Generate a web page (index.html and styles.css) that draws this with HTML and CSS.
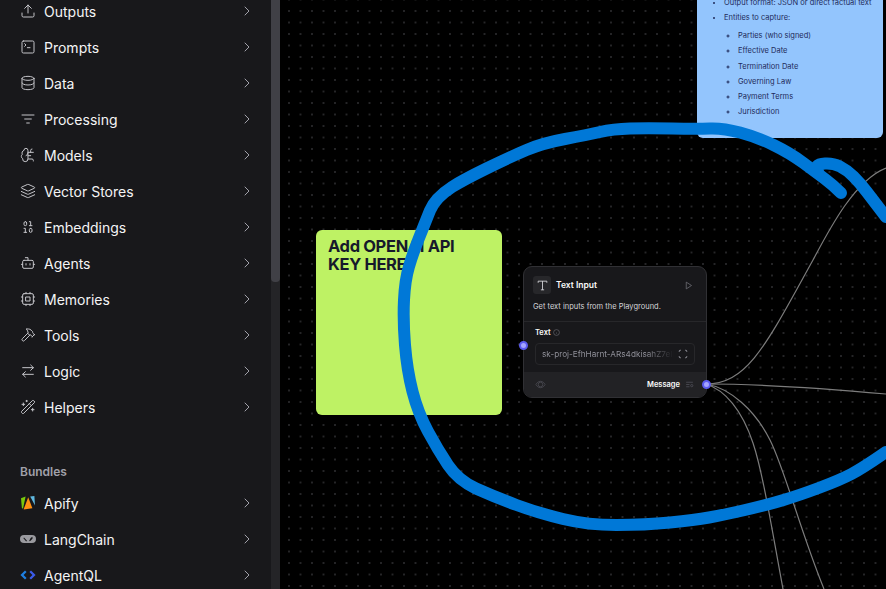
FILE: index.html
```html
<!DOCTYPE html>
<html lang="en">
<head>
  <meta charset="UTF-8">
  <meta name="viewport" content="width=device-width, initial-scale=1.0">
  <title>Flow editor</title>
  <link rel="stylesheet" href="styles.css">
</head>
<body>
<div class="app">
  <aside class="sidebar">
    <div class="sidebar-list">
      <div class="row">
        <svg class="icon" viewBox="0 0 24 24"><path d="M21 15v4a2 2 0 0 1-2 2H5a2 2 0 0 1-2-2v-4"/><path d="M17 8l-5-5-5 5"/><path d="M12 3v12"/></svg>
        <span class="row-name">Outputs</span>
        <svg class="chevron" viewBox="0 0 24 24"><path d="m9 18 6-6-6-6"/></svg>
      </div>
      <div class="row">
        <svg class="icon" viewBox="0 0 24 24"><path d="m7 11 2-2-2-2"/><path d="M11 13h4"/><rect x="3" y="3" width="18" height="18" rx="2"/></svg>
        <span class="row-name">Prompts</span>
        <svg class="chevron" viewBox="0 0 24 24"><path d="m9 18 6-6-6-6"/></svg>
      </div>
      <div class="row">
        <svg class="icon" viewBox="0 0 24 24"><ellipse cx="12" cy="5" rx="9" ry="3"/><path d="M3 5V19A9 3 0 0 0 21 19V5"/><path d="M3 12A9 3 0 0 0 21 12"/></svg>
        <span class="row-name">Data</span>
        <svg class="chevron" viewBox="0 0 24 24"><path d="m9 18 6-6-6-6"/></svg>
      </div>
      <div class="row">
        <svg class="icon" viewBox="0 0 24 24"><path d="M3 6h18"/><path d="M7 12h10"/><path d="M10 18h4"/></svg>
        <span class="row-name">Processing</span>
        <svg class="chevron" viewBox="0 0 24 24"><path d="m9 18 6-6-6-6"/></svg>
      </div>
      <div class="row">
        <svg class="icon" viewBox="0 0 24 24"><path d="M12 5a3 3 0 1 0-5.997.125 4 4 0 0 0-2.526 5.77 4 4 0 0 0 .556 6.588A4 4 0 1 0 12 18Z"/><path d="M9 13a4.5 4.5 0 0 0 3-4"/><path d="M12 13h4"/><path d="M12 18h6a2 2 0 0 1 2 2v1"/><path d="M12 8h8"/><path d="M16 8V5a2 2 0 0 1 2-2"/></svg>
        <span class="row-name">Models</span>
        <svg class="chevron" viewBox="0 0 24 24"><path d="m9 18 6-6-6-6"/></svg>
      </div>
      <div class="row">
        <svg class="icon" viewBox="0 0 24 24"><path d="m12.83 2.18a2 2 0 0 0-1.66 0L2.6 6.08a1 1 0 0 0 0 1.83l8.58 3.91a2 2 0 0 0 1.66 0l8.58-3.9a1 1 0 0 0 0-1.83Z"/><path d="m22 17.65-9.17 4.16a2 2 0 0 1-1.66 0L2 17.65"/><path d="m22 12.65-9.17 4.16a2 2 0 0 1-1.66 0L2 12.65"/></svg>
        <span class="row-name">Vector Stores</span>
        <svg class="chevron" viewBox="0 0 24 24"><path d="m9 18 6-6-6-6"/></svg>
      </div>
      <div class="row">
        <svg class="icon" viewBox="0 0 24 24"><rect x="14" y="14" width="4" height="6" rx="2"/><rect x="6" y="4" width="4" height="6" rx="2"/><path d="M6 20h4"/><path d="M14 10h4"/><path d="M6 14h2v6"/><path d="M14 4h2v6"/></svg>
        <span class="row-name">Embeddings</span>
        <svg class="chevron" viewBox="0 0 24 24"><path d="m9 18 6-6-6-6"/></svg>
      </div>
      <div class="row">
        <svg class="icon" viewBox="0 0 24 24"><path d="M12 8V4H8"/><rect x="4" y="8" width="16" height="12" rx="2"/><path d="M2 14h2"/><path d="M20 14h2"/><path d="M15 13v2"/><path d="M9 13v2"/></svg>
        <span class="row-name">Agents</span>
        <svg class="chevron" viewBox="0 0 24 24"><path d="m9 18 6-6-6-6"/></svg>
      </div>
      <div class="row">
        <svg class="icon" viewBox="0 0 24 24"><rect x="4" y="4" width="16" height="16" rx="2"/><rect x="9" y="9" width="6" height="6"/><path d="M15 2v2"/><path d="M15 20v2"/><path d="M2 15h2"/><path d="M2 9h2"/><path d="M20 15h2"/><path d="M20 9h2"/><path d="M9 2v2"/><path d="M9 20v2"/></svg>
        <span class="row-name">Memories</span>
        <svg class="chevron" viewBox="0 0 24 24"><path d="m9 18 6-6-6-6"/></svg>
      </div>
      <div class="row">
        <svg class="icon" viewBox="0 0 24 24"><path d="m15 12-8.373 8.373a1 1 0 1 1-3-3L12 9"/><path d="m18 15 4-4"/><path d="m21.5 11.5-1.914-1.914A2 2 0 0 1 19 8.172V7l-2.26-2.26a6 6 0 0 0-4.202-1.756L9 2.96l.92.82A6.18 6.18 0 0 1 12 8.4V10l2 2h1.172a2 2 0 0 1 1.414.586L18.5 14.5"/></svg>
        <span class="row-name">Tools</span>
        <svg class="chevron" viewBox="0 0 24 24"><path d="m9 18 6-6-6-6"/></svg>
      </div>
      <div class="row">
        <svg class="icon" viewBox="0 0 24 24"><path d="m16 3 4 4-4 4"/><path d="M20 7H4"/><path d="m8 21-4-4 4-4"/><path d="M4 17h16"/></svg>
        <span class="row-name">Logic</span>
        <svg class="chevron" viewBox="0 0 24 24"><path d="m9 18 6-6-6-6"/></svg>
      </div>
      <div class="row">
        <svg class="icon" viewBox="0 0 24 24"><path d="m21.64 3.64-1.28-1.28a1.21 1.21 0 0 0-1.72 0L2.36 18.64a1.21 1.21 0 0 0 0 1.72l1.28 1.28a1.2 1.2 0 0 0 1.72 0L21.64 5.36a1.2 1.2 0 0 0 0-1.72"/><path d="m14 7 3 3"/><path d="M5 6v4"/><path d="M19 14v4"/><path d="M10 2v2"/><path d="M7 8H3"/><path d="M21 16h-4"/><path d="M11 3H9"/></svg>
        <span class="row-name">Helpers</span>
        <svg class="chevron" viewBox="0 0 24 24"><path d="m9 18 6-6-6-6"/></svg>
      </div>

      <h3 class="section-title">Bundles</h3>

      <div class="row">
        <svg class="icon logo" viewBox="0 0 16 16"><path fill="#7ac70c" d="M1 3.2 5.6 1.5 3 13.8 1.9 13Z"/><path fill="#ff9013" d="M8.2 2.2 12.4 13.2 3.6 14.6Z"/><path fill="#5fb8e0" d="M10.2 1.4 14.4 1 15 10.6Z"/></svg>
        <span class="row-name">Apify</span>
        <svg class="chevron" viewBox="0 0 24 24"><path d="m9 18 6-6-6-6"/></svg>
      </div>
      <div class="row">
        <svg class="icon logo" viewBox="0 0 16 16"><rect x="0" y="4" width="16" height="8" rx="4" fill="#9a9a9f"/><path fill="#18181b" d="M4 6.4 7 9.8 6.2 10.4 3.4 7.2ZM12.4 5.8 10.6 7 9 10.2 10.6 9.8 12.6 7.6Z"/></svg>
        <span class="row-name">LangChain</span>
        <svg class="chevron" viewBox="0 0 24 24"><path d="m9 18 6-6-6-6"/></svg>
      </div>
      <div class="row">
        <svg class="icon logo" viewBox="0 0 16 16"><path fill="#1f7fe0" d="M5 3.4 6.6 5 3.6 8 6.6 11 5 12.6 0.4 8Z"/><path fill="#3b5be8" d="M11 3.4 9.4 5 12.4 8 9.4 11 11 12.6 15.6 8Z"/></svg>
        <span class="row-name">AgentQL</span>
        <svg class="chevron" viewBox="0 0 24 24"><path d="m9 18 6-6-6-6"/></svg>
      </div>
    </div>
    <div class="scrollbar"><div class="scrollbar-thumb"></div></div>
  </aside>

  <main class="canvas">
    <div class="note note-blue">
      <ul>
        <li>Output format: JSON or direct factual text</li>
        <li>Entities to capture:
          <ul>
            <li>Parties (who signed)</li>
            <li>Effective Date</li>
            <li>Termination Date</li>
            <li>Governing Law</li>
            <li>Payment Terms</li>
            <li>Jurisdiction</li>
          </ul>
        </li>
      </ul>
    </div>

    <div class="note note-green">
      <h2>Add OPENAI API KEY HERE</h2>
    </div>

    <svg class="edges" viewBox="0 0 606 589">
      <path d="M426 384C468 384 487 343 533 260C550 228 575 180 606 168"/>
      <path d="M426 384C480 384 540 388 606 394"/>
      <path d="M426 384C445 390 462 410 473 443C483 473 492 530 503 589"/>
      <path d="M426 384C450 388 475 410 490 440C505 470 520 530 544 589"/>
    </svg>

    <div class="node">
      <div class="node-head">
        <div class="node-title">
          <span class="node-icon"><svg viewBox="0 0 24 24"><path d="M4 7V4h16v3"/><path d="M9 20h6"/><path d="M12 4v16"/></svg></span>
          <span>Text Input</span>
          <svg class="node-play" viewBox="0 0 24 24"><path d="M6 3l14 9-14 9Z"/></svg>
        </div>
        <p class="node-desc">Get text inputs from the Playground.</p>
      </div>
      <div class="node-field">
        <div class="field-label">Text
          <svg viewBox="0 0 24 24"><circle cx="12" cy="12" r="10"/><path d="M12 16v-4"/><path d="M12 8h.01"/></svg>
        </div>
        <div class="field-input">
          <span class="field-value">sk-proj-EfhHarnt-ARs4dkisahZ7eIP</span>
          <svg viewBox="0 0 24 24"><path d="M3 7V5a2 2 0 0 1 2-2h2"/><path d="M17 3h2a2 2 0 0 1 2 2v2"/><path d="M21 17v2a2 2 0 0 1-2 2h-2"/><path d="M7 21H5a2 2 0 0 1-2-2v-2"/></svg>
        </div>
      </div>
      <div class="node-output">
        <svg class="output-eye" viewBox="0 0 24 24"><path d="M2 12s3.5-7 10-7 10 7 10 7-3.5 7-10 7-10-7-10-7Z"/><circle cx="12" cy="12" r="5"/></svg>
        <span class="output-name">Message</span>
        <svg class="output-type" viewBox="0 0 24 24"><path d="M3 6h18"/><path d="M3 12h9"/><path d="M3 18h9"/><circle cx="18" cy="15" r="3"/></svg>
      </div>
      <span class="port port-in"></span>
      <span class="port port-out"></span>
    </div>

    <!-- freehand marker drawn over the canvas -->
    <svg class="scribble" viewBox="0 0 606 589">
      <path d="M561 193Q553 185 545 179Q537 173 523.5 163Q510 153 493.5 145Q477 137 460 132.5Q443 128 430 128.5Q417 129 392 128.5Q367 128 350 128.5Q333 129 320 132Q307 135 285 139Q263 143 246.5 150Q230 157 206.5 168.5Q183 180 172 187Q155 198 150 210.5Q145 223 139 238Q133 253 129 266.5Q125 280 124 300Q123 320 125 345Q127 370 132.5 391.5Q138 413 148 431.5Q158 450 168 465Q178 480 196 488.5Q215 497 236.5 505Q258 513 283 519Q308 525 336.5 525Q365 525 390 522.5Q415 520 429 517.5Q443 515 465 510Q487 505 503.5 500Q520 495 540 487.5Q560 480 571.5 474Q583 468 606 452"/>
      <path d="M538 172Q533 164 545 163.5Q553 163 560 166.5Q567 170 573.5 176.5Q580 183 586.5 191.5L606 217"/>
    </svg>
  </main>
</div>
</body>
</html>
```

FILE: styles.css
```css
* {
  box-sizing: border-box;
}

body {
  margin: 0;
  font-family: 'Inter', 'Liberation Sans', sans-serif;
  background-color: #000000;
}

.app {
  display: flex;
  width: 886px;
  height: 589px;
  overflow: hidden;
}

/* sidebar */
.sidebar {
  display: flex;
  flex: 0 0 280px;
  height: 589px;
  background-color: #18181b;
}

.sidebar-list {
  flex: 1;
  margin-top: -7px;
}

.row {
  display: flex;
  align-items: center;
  gap: 8px;
  height: 36px;
  padding: 0 20px;
  color: #f4f4f5;
  font-size: 14px;
}

.row-name {
  flex: 1;
}

.icon {
  flex: 0 0 16px;
  width: 16px;
  height: 16px;
  fill: none;
  stroke: #c4c4c9;
  stroke-width: 1.5;
  stroke-linecap: round;
  stroke-linejoin: round;
}

.logo {
  stroke: none;
}

.chevron {
  width: 16px;
  height: 16px;
  margin-right: -4px;
  fill: none;
  stroke: #a1a1aa;
  stroke-width: 1.5;
  stroke-linecap: round;
  stroke-linejoin: round;
}

.section-title {
  margin: 39px 20px 5px;
  color: #a1a1aa;
  font-size: 12px;
  font-weight: 600;
  line-height: 16px;
}

.scrollbar {
  flex: 0 0 9px;
  background-color: #242427;
}

.scrollbar-thumb {
  height: 282px;
  border-radius: 0 0 4px 4px;
  background-color: #404046;
}

/* canvas */
.canvas {
  position: relative;
  flex: 1;
  height: 589px;
  overflow: hidden;
  background-color: #000000;
  background-image: radial-gradient(circle, #333336 0.6px, transparent 0.9px);
  background-size: 11.5px 11.5px;
  background-position: 3.25px 5.25px;
}

.note {
  position: absolute;
  width: 186px;
  border-radius: 6px;
}

.note-blue {
  left: 417px;
  top: -24px;
  height: 162px;
  padding: 22px 8px;
  background-color: #93c5fd;
  color: #1e2a5a;
  font-size: 7.5px;
}

.note-blue ul {
  margin: 0;
  padding-left: 19px;
}

.note-blue li {
  margin-bottom: 6.2px;
  line-height: 9px;
}

.note-blue ul ul {
  margin-top: 9px;
  padding-left: 14px;
}

.note-green {
  left: 36px;
  top: 230px;
  height: 185px;
  padding: 7px 12px;
  background-color: #bef264;
  color: #16192b;
}

.note-green h2 {
  margin: 0;
  font-size: 16.5px;
  font-weight: 700;
  line-height: 18px;
  letter-spacing: -0.35px;
}

.edges {
  position: absolute;
  left: 0;
  top: 0;
  width: 606px;
  height: 589px;
  fill: none;
  stroke: #7c7c7c;
  stroke-width: 1.2;
}

.node {
  position: absolute;
  left: 243px;
  top: 266px;
  width: 184px;
  height: 132px;
  border: 1px solid #303034;
  border-radius: 9px;
  background-color: #18181b;
  color: #fafafa;
}

.node-head {
  height: 55px;
  padding: 9px 9px 0;
  border-bottom: 1px solid #27272a;
}

.node-title {
  display: flex;
  align-items: center;
  gap: 5px;
  font-size: 8.5px;
  font-weight: 600;
}

.node-icon {
  display: flex;
  align-items: center;
  justify-content: center;
  width: 18px;
  height: 18px;
  border-radius: 3px;
  background-color: #27272a;
}

.node-icon svg {
  width: 13px;
  height: 13px;
  fill: none;
  stroke: #e4e4e7;
  stroke-width: 1.5;
}

.node-play {
  width: 9px;
  height: 9px;
  margin-left: auto;
  margin-right: 4px;
  fill: none;
  stroke: #71717a;
  stroke-width: 2;
  stroke-linejoin: round;
}

.node-desc {
  margin: 8px 0 0;
  color: #d4d4d8;
  font-size: 7.5px;
  line-height: 10px;
}

.node-field {
  height: 50px;
  padding: 5px 11px 0;
}

.field-label {
  display: flex;
  align-items: center;
  gap: 2px;
  height: 10px;
  font-size: 7.5px;
  font-weight: 600;
}

.field-label svg {
  width: 7px;
  height: 7px;
  fill: none;
  stroke: #71717a;
  stroke-width: 2;
}

.field-input {
  display: flex;
  align-items: center;
  height: 22px;
  margin-top: 6px;
  padding: 0 6px;
  border: 1px solid #27272a;
  border-radius: 4px;
  color: #8f8f98;
  font-size: 8.2px;
}

.field-value {
  flex: 1;
  overflow: hidden;
  white-space: nowrap;
  -webkit-mask-image: linear-gradient(to right, #000 78%, transparent 100%);
  mask-image: linear-gradient(to right, #000 78%, transparent 100%);
}

.field-input svg {
  flex: 0 0 10px;
  width: 10px;
  height: 10px;
  margin-left: 4px;
  fill: none;
  stroke: #a1a1aa;
  stroke-width: 2;
}

.node-output {
  display: flex;
  align-items: center;
  height: 25px;
  padding: 0 12px 0 11px;
  border-radius: 0 0 8px 8px;
  background-color: #222225;
  font-size: 7.5px;
  font-weight: 600;
}

.output-eye {
  width: 11px;
  height: 11px;
  fill: none;
  stroke: #52525b;
  stroke-width: 1.5;
}

.output-name {
  margin-left: auto;
  margin-right: 5px;
}

.output-type {
  width: 9px;
  height: 9px;
  fill: none;
  stroke: #52525b;
  stroke-width: 2;
}

.port {
  position: absolute;
  width: 9px;
  height: 9px;
  border: 2px solid #5b5bf0;
  border-radius: 50%;
  background-color: #a5a5ff;
}

.port-in {
  left: -5px;
  top: 74px;
}

.port-out {
  right: -5px;
  top: 113px;
}

.scribble {
  position: absolute;
  left: 0;
  top: 0;
  width: 606px;
  height: 589px;
  fill: none;
  stroke: #0078d7;
  stroke-width: 12;
  stroke-linecap: round;
  stroke-linejoin: round;
}
```
